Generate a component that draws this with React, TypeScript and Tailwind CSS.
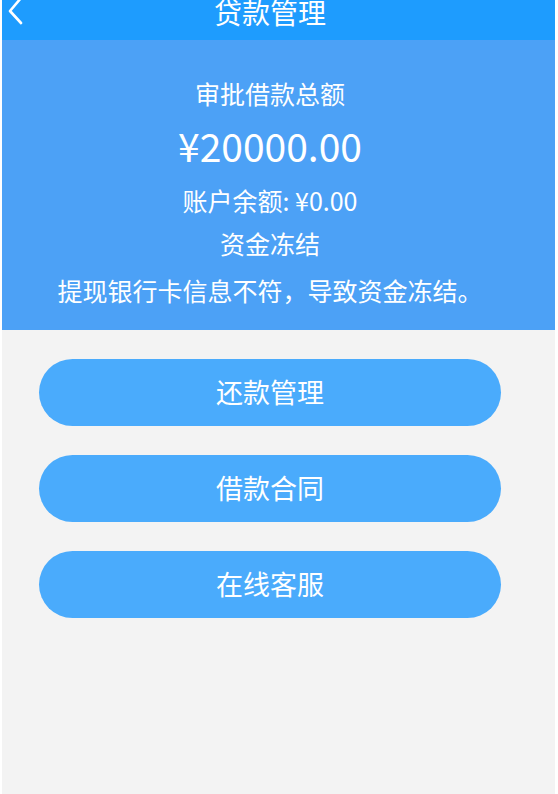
const BUTTONS = ['还款管理', '借款合同', '在线客服']

export default function App() {
  return (
    <div
      className="w-[558px] h-[794px] bg-white pl-[2px] pr-[3px] flex"
      style={{ fontFamily: '"Noto Sans CJK SC", "Noto Sans", sans-serif' }}
    >
      <div className="flex-1 flex flex-col bg-[#f3f3f3]">
        <header className="relative h-[40px] bg-[#1e9cfe] overflow-hidden text-white">
          <svg
            className="absolute left-[4px] -top-[4px]"
            width="20"
            height="30"
            viewBox="0 0 20 30"
            fill="none"
          >
            <path d="M15 2 L4 15 L15 27" stroke="white" strokeWidth="2.6" strokeLinecap="round" strokeLinejoin="round" />
          </svg>
          <div className="w-[536px] text-center text-[28px] leading-none -mt-[2px]">贷款管理</div>
        </header>

        <section className="h-[290px] bg-[#4ca1f6] text-white">
          <div className="w-[536px] flex flex-col items-center pt-[41px]">
            <div className="text-[25px] leading-none">审批借款总额</div>
            <div className="text-[39px] leading-none mt-[20px]">¥20000.00</div>
            <div className="text-[25px] leading-none mt-[23px]">账户余额: ¥0.00</div>
            <div className="text-[25px] leading-none mt-[18px]">资金冻结</div>
            <div className="text-[25px] leading-none mt-[22px]">提现银行卡信息不符，导致资金冻结。</div>
          </div>
        </section>

        <div className="w-[536px] flex flex-col items-center gap-[29px] pt-[29px]">
          {BUTTONS.map(label => (
            <button
              key={label}
              className="w-[462px] h-[67px] rounded-full bg-[#4aabfc] text-white text-[27px]"
            >
              {label}
            </button>
          ))}
        </div>
      </div>
    </div>
  )
}
